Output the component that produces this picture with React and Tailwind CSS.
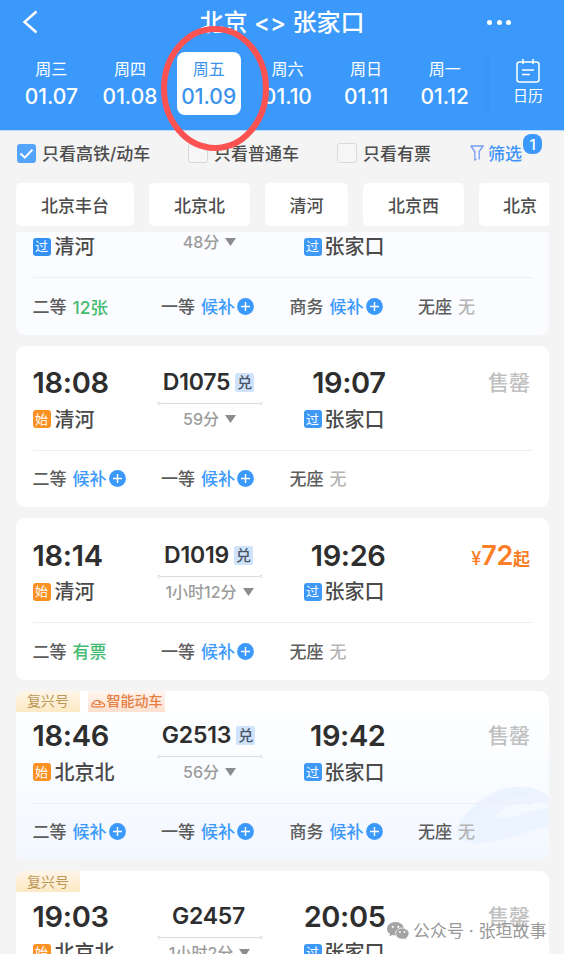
import React from "react";

const DAYS = [
  ["周三", "01.07"],
  ["周四", "01.08"],
  ["周五", "01.09"],
  ["周六", "01.10"],
  ["周日", "01.11"],
  ["周一", "01.12"],
];

const STATIONS = [
  ["北京丰台", "w-[118px]"],
  ["北京北", "w-[101px]"],
  ["清河", "w-[83px]"],
  ["北京西", "w-[101px]"],
  ["北京", "w-[82px]"],
];

const TRAINS = [
  {
    depart: "", arrive: "", no: "", from: "清河", pass: true, time: "48分", tint: "bg-[#fbfcff]",
    seats: [["二等", "12张"], ["一等", "候补"], ["商务", "候补"], ["无座", "无"]],
  },
  {
    depart: "18:08", arrive: "19:07", no: "D1075", swap: true, from: "清河", time: "59分", tint: "bg-white",
    seats: [["二等", "候补"], ["一等", "候补"], ["无座", "无"]],
  },
  {
    depart: "18:14", arrive: "19:26", no: "D1019", swap: true, from: "清河", time: "1小时12分", price: "72", tint: "bg-white",
    seats: [["二等", "有票"], ["一等", "候补"], ["无座", "无"]],
  },
  {
    depart: "18:46", arrive: "19:42", no: "G2513", swap: true, from: "北京北", time: "56分", tags: true, smart: true,
    tint: "bg-linear-to-b from-white via-[#f9fcff] via-50% to-[#f3f7ff]",
    seats: [["二等", "候补"], ["一等", "候补"], ["商务", "候补"], ["无座", "无"]],
  },
  {
    depart: "19:03", arrive: "20:05", no: "G2457", from: "北京北", time: "1小时2分", tags: true, tint: "bg-white",
    seats: [],
  },
];

function Check({ on, children }) {
  return (
    <div className="flex items-center gap-[6px]">
      {on ? (
        <span className="-mt-[2px] flex h-[19px] w-[19px] items-center justify-center rounded-[3px] bg-[#53a5fb]">
          <svg width="15" height="12" viewBox="0 0 15 12" fill="none" stroke="white" strokeWidth="2">
            <path d="M1.5 5.5 L5.8 9.6 L13.5 1.6" />
          </svg>
        </span>
      ) : (
        <span className="-mt-[3px] h-[20px] w-[20px] rounded-[3px] border-[1.5px] border-[#d9d9d9] bg-[#f6f6f6]" />
      )}
      <span>{children}</span>
    </div>
  );
}

function Mark({ children, color }) {
  return (
    <span className={`-mt-px flex h-[18px] w-[18px] shrink-0 items-center justify-center rounded-[3px] text-[13px] font-normal leading-none text-white ${color}`}>
      {children}
    </span>
  );
}

function Seat({ name, value }) {
  const color =
    value === "无" ? "text-[#b5b5b5]" : value === "候补" ? "text-[#3b99fb]" : "text-[#45bb72]";
  return (
    <div className="flex w-[128.5px] shrink-0 items-center text-[17px] font-medium leading-none">
      <span className="text-[#5c5c5c]">{name}</span>
      <span className={`ml-[6px] ${color} ${value === "12张" ? "text-[17.5px]" : ""}`}>{value}</span>
      {value === "候补" && (
        <svg className="-mt-[2px] ml-[2px]" width="17" height="17" viewBox="0 0 17 17">
          <circle cx="8.5" cy="8.5" r="8.4" fill="#3b99fb" />
          <path d="M8.5 4 V13 M4 8.5 H13" stroke="white" strokeWidth="1.4" />
        </svg>
      )}
    </div>
  );
}

function TrainCard({ t }) {
  return (
    <div className={`relative shrink-0 overflow-hidden rounded-[9px] ${t.tags ? "h-[169.5px]" : "h-[161.5px]"} ${t.tint}`}>
      {t.smart && (
        <svg className="absolute right-0 top-[92px]" width="100" height="66" viewBox="0 0 100 66">
          <path d="M8 44 C22 22 42 5 65 4 C80 3 92 7 100 14 V44 C82 45 64 56 42 59 C25 62 12 60 8 54 Z" fill="#eaf2ff" opacity=".8" />
          <path d="M14 38 C35 12 60 4 84 11 C65 12 40 22 14 38" fill="#e6effd" opacity=".5" />
          <path d="M49 30 C60 20 84 18 100 21 V25 C82 26 67 34 53 35 C48 35 46 33 49 30" fill="#f4f9ff" />
        </svg>
      )}
      {t.tags && (
        <div className="flex h-[21px] items-start gap-2 text-[14px] leading-none">
          <span className="flex h-[21px] w-[64px] items-center justify-center bg-linear-to-b from-[#fff5e8] to-[#fce9c4] text-[#bb9857]">复兴号</span>
          {t.smart && (
            <span className="flex h-[21px] w-[77px] items-center justify-center gap-[1px] bg-linear-to-b from-[#fff5ef] to-[#fde0cf] font-medium text-[#e57e42]">
              <svg className="mt-[4px]" width="15" height="9" viewBox="0 0 15 9" fill="none" stroke="#e57e42" strokeWidth="1.2">
                <path d="M.8 6 C2 1.500 6.500 .5 8.500 2 L13 5 C14.500 6.500 13.500 7.800 12 7.800 H1.500 Q.5 7.500 .8 6 M2 4.500 L5.500 5.500 H9.500 L7.500 2.500" />
              </svg>
              智能动车
            </span>
          )}
        </div>
      )}
      <div className={`relative px-[16.5px] ${t.tags ? "pt-[6px]" : "pt-[19px]"}`}>
        <div className="flex h-[66px]">
          <div className="flex w-[124px] flex-col">
            <span className="flex h-9 items-center text-[29px] font-semibold leading-none tracking-[-0.3px] text-[#2e2e2e]">{t.depart}</span>
            <div className="mt-[7px] flex h-6 items-center gap-[4px] pt-px text-[20px] font-medium leading-none text-[#4a4a4a]">
              <Mark color={t.pass ? "bg-[#3390f5]" : "bg-[#fb9122]"}>{t.pass ? "过" : "始"}</Mark>
              {t.from}
            </div>
          </div>
          <div className="flex w-[106px] flex-col">
            <div className="flex h-9 items-center justify-center gap-[5px] pr-[2px] text-[23px] font-semibold leading-none tracking-[-0.2px] text-[#2e2e2e]">
              {t.no}
              {t.swap && <span className="flex h-[19px] w-[19px] items-center justify-center rounded-[2px] bg-[#cfe3fc] text-[15px] font-medium tracking-normal text-[#4a5668]">兑</span>}
            </div>
            <svg className={`mt-px shrink-0 ${t.no ? "" : "invisible"}`} width="106" height="5" viewBox="0 0 106 5" fill="white" stroke="#dcdcdc">
              <path d="M3 2.500 H103" />
              <circle cx="2" cy="2.500" r="1.200" />
              <circle cx="104" cy="2.500" r="1.200" />
            </svg>
            <div className={`flex h-6 items-center justify-center gap-[6px] text-[16px] font-medium leading-none text-[#9c9c9c] ${t.no ? "mt-[1px]" : "-mt-[4px]"}`}>
              {t.time}
              <svg width="11" height="8" viewBox="0 0 11 8"><path d="M0 0 H11 L5.500 8 Z" fill="#8c8c8c" /></svg>
            </div>
          </div>
          <div className="ml-[41px] flex w-[82px] flex-col">
            <span className="flex h-9 items-center justify-end text-[29px] font-semibold leading-none tracking-[-0.4px] text-[#2e2e2e]">{t.arrive}</span>
            <div className="mt-[7px] flex h-6 items-center gap-[3px] whitespace-nowrap pt-px text-[20px] font-medium leading-none text-[#4a4a4a]">
              <Mark color="bg-[#3d98f6]">过</Mark>
              张家口
            </div>
          </div>
          <div className="flex h-9 flex-1 items-center justify-end pr-[2.5px] leading-none">
            {t.price ? (
              <span className="flex items-baseline font-semibold text-[#fb7d25]">
                <span className="text-[18px] font-medium">¥</span>
                <span className="text-[27px] tracking-[-0.3px]">{t.price}</span>
                <span className="text-[17px] font-bold">起</span>
              </span>
            ) : (
              t.no && <span className="text-[21px] font-medium text-[#c0c0c0]">售罄</span>
            )}
          </div>
        </div>
        <div className="mt-[19px] h-px bg-[#efeff1]" />
        <div className="flex h-[57px] items-center pt-[1px]">
          {t.seats.map(([name, value]) => <Seat key={name} name={name} value={value} />)}
        </div>
      </div>
    </div>
  );
}

export default function App() {
  return (
    <div className="relative flex h-[954px] w-[564px] flex-col overflow-hidden bg-[#f4f4f4] font-['Inter','Noto_Sans_CJK_SC',sans-serif]">
      <header className="h-[130px] shrink-0 bg-[#3b99fb] text-white">
        <div className="flex h-[44px] items-center">
          <svg className="ml-[21px] shrink-0" width="18" height="24" viewBox="0 0 18 24" fill="none" stroke="white" strokeWidth="2.500">
            <path d="M15.500 1.500 L3.500 12 L15.500 22.500" />
          </svg>
          <h1 className="ml-[139px] w-[208px] pt-[2px] text-center text-[24px] font-medium leading-none">北京 &lt;&gt; 张家口</h1>
          <div className="ml-[101px] flex gap-[4.500px]">
            <i className="h-[5px] w-[5px] rounded-full bg-white" />
            <i className="h-[5px] w-[5px] rounded-full bg-white" />
            <i className="h-[5px] w-[5px] rounded-full bg-white" />
          </div>
        </div>
        <div className="flex pl-[12px] pt-2">
          {DAYS.map(([week, date], i) => (
            <div key={date} className="flex w-[78.700px] shrink-0 justify-center">
              <div className={`flex h-[63px] w-[64px] flex-col items-center rounded-[8px] pt-[9px] leading-none ${i === 2 ? "bg-white text-[#3b93ee]" : ""}`}>
                <span className="text-[16px] leading-[16px]">{week}</span>
                <span className="mt-[9px] text-[21px] font-medium leading-[22px]">{date}</span>
              </div>
            </div>
          ))}
          <div className="h-[64px] w-[5px] bg-linear-to-r from-transparent to-[#3893f5]" />
          <div className="flex flex-1 flex-col items-center pl-[3px] pt-[7px]">
            <svg width="24" height="24" viewBox="0 0 24 24" fill="none" stroke="white" strokeWidth="1.500">
              <rect x="1" y="3" width="22" height="20" rx="2.500" />
              <path d="M7 0 V5 M17 0 V5 M6 11 H18 M6 15.500 H14" />
            </svg>
            <span className="mt-[5px] text-[15px] leading-[15px]">日历</span>
          </div>
        </div>
      </header>

      <div className="flex h-[53px] shrink-0 items-center border-t border-[#b9dcfb] pb-[5px] text-[17px] font-medium leading-none text-[#4d4d4d]">
        <div className="ml-[17px] w-[171px]"><Check on>只看高铁/动车</Check></div>
        <div className="w-[149px]"><Check>只看普通车</Check></div>
        <div className="w-[133px]"><Check>只看有票</Check></div>
        <div className="relative flex items-center gap-[4px] text-[#3b93fb]">
          <svg className="-mt-[3px]" width="14" height="16" viewBox="0 0 14 16" fill="none" stroke="#729cf2" strokeWidth="1.300">
            <path d="M.8 1 H13.200 L9.200 6.500 V14.500 M.8 1 L4.800 6.500 V15 L6.500 14" />
          </svg>
          筛选
          <span className="absolute -right-[20px] -top-[12px] flex h-[20px] w-[19px] items-center justify-center rounded-[8px] bg-[#3b99fb] text-[15px] text-white">1</span>
        </div>
      </div>

      <div className="ml-[16px] mr-[15px] flex h-[49px] shrink-0 gap-[15px] overflow-hidden">
        {STATIONS.map(([name, width]) => (
          <div key={name} className={`flex h-[43px] shrink-0 items-center justify-center rounded-[5px] bg-white pt-[3px] text-[17px] font-medium leading-none text-[#4d4d4d] ${width}`}>{name}</div>
        ))}
      </div>

      <main className="ml-[16px] mr-[15px] flex min-h-0 flex-1 flex-col overflow-hidden">
        <div className="-mt-[58.700px] flex flex-col gap-[11px]">
          {TRAINS.map((t) => <TrainCard key={t.no} t={t} />)}
        </div>
      </main>

      <svg className="absolute left-[160px] top-[25px]" width="110" height="127" viewBox="0 0 110 127" fill="none">
        <ellipse cx="55" cy="63.500" rx="51" ry="59.500" stroke="#fd5252" strokeWidth="6" />
      </svg>

      <div className="absolute left-[387px] top-[922px] flex items-center gap-[4px] whitespace-nowrap text-[17px] leading-none text-[#999]">
        <svg width="22" height="19" viewBox="0 0 22 19" fill="#a3a3a3">
          <path d="M8.500 0 C3.800 0 0 3 0 6.800 C0 9 1.200 10.900 3.100 12.100 L2.300 14.500 L5.200 13.100 C6.200 13.400 7.300 13.600 8.500 13.600 C13.200 13.600 17 10.600 17 6.800 C17 3 13.200 0 8.500 0" />
          <path d="M15.300 6 C11.600 6 8.600 8.400 8.600 11.600 C8.600 14.700 11.600 17.200 15.300 17.200 C16.200 17.200 17 17.100 17.800 16.800 L20 18 L19.400 16 C21 15 22 13.400 22 11.600 C22 8.400 19 6 15.300 6" stroke="white" strokeWidth=".8" />
          <g fill="white">
            <circle cx="5.800" cy="4.800" r="1.100" /><circle cx="11.300" cy="4.800" r="1.100" />
            <circle cx="13" cy="10" r=".9" /><circle cx="17.500" cy="10" r=".9" />
          </g>
        </svg>
        <span>公众号 · 张垣故事</span>
      </div>
    </div>
  );
}
